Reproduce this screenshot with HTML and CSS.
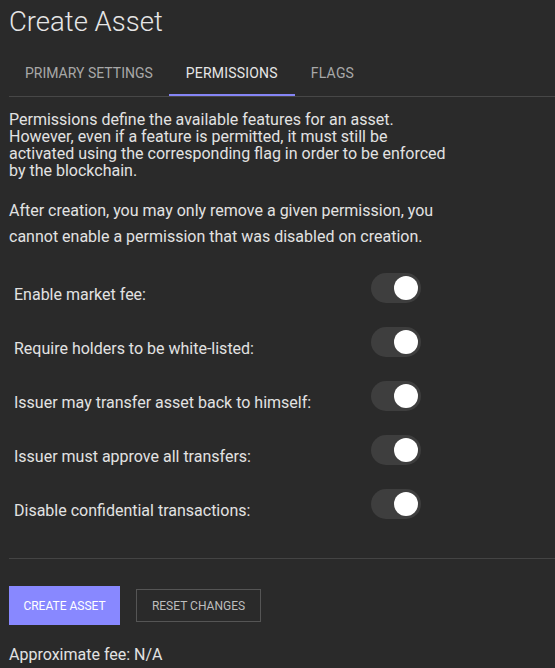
FILE: index.html
```html
<!DOCTYPE html>
<html>
<head>
<meta charset="utf-8">
<link rel="stylesheet" href="styles.css">
</head>
<body>
<div class="page">
  <h1 class="title">Create Asset</h1>
  <div class="tabs">
    <div class="tab">Primary Settings</div>
    <div class="tab active">Permissions</div>
    <div class="tab">Flags</div>
  </div>
  <p class="intro">Permissions define the available features for an asset.<br>However, even if a feature is permitted, it must still be<br>activated using the corresponding flag in order to be enforced<br>by the blockchain.</p>
  <p class="note">After creation, you may only remove a given permission, you<br>cannot enable a permission that was disabled on creation.</p>
  <div class="rows">
    <div class="row"><span class="label">Enable market fee:</span><span class="switch"><span class="knob"></span></span></div>
    <div class="row"><span class="label">Require holders to be white-listed:</span><span class="switch"><span class="knob"></span></span></div>
    <div class="row"><span class="label">Issuer may transfer asset back to himself:</span><span class="switch"><span class="knob"></span></span></div>
    <div class="row"><span class="label">Issuer must approve all transfers:</span><span class="switch"><span class="knob"></span></span></div>
    <div class="row"><span class="label">Disable confidential transactions:</span><span class="switch"><span class="knob"></span></span></div>
  </div>
  <hr class="sep">
  <div class="actions">
    <button class="btn primary">Create Asset</button>
    <button class="btn outline">Reset Changes</button>
  </div>
  <div class="fee">Approximate fee: N/A</div>
</div>
</body>
</html>
```
FILE: styles.css
```css
html, body {
  margin: 0;
  padding: 0;
  background: #2a2a2a;
}
body {
  font-family: Roboto, "Liberation Sans", sans-serif;
  color: #e2e2e2;
  width: 555px;
  height: 668px;
  overflow: hidden;
}
.page {
  padding-left: 9px;
}
.title {
  margin: 0;
  padding-top: 5px;
  font-size: 27.5px;
  font-weight: 300;
  line-height: 34px;
  color: #e6e6e6;
}
.tabs {
  display: flex;
  margin-top: 11px;
  border-bottom: 1px solid #474747;
}
.tab {
  padding: 0 16px;
  height: 46px;
  line-height: 46px;
  font-size: 14px;
  text-transform: uppercase;
  color: #a8a8a8;
  border-bottom: 2px solid transparent;
  box-sizing: border-box;
}
.tab.active {
  color: #e6e6e6;
  border-bottom-color: #8585f5;
  padding: 0 17px;
  letter-spacing: 0.2px;
}
.tab:last-child {
  letter-spacing: 0.2px;
}
.intro {
  margin: 14px 0 0;
  font-size: 16px;
  line-height: 17px;
}
.note {
  margin: 19px 0 0;
  font-size: 16px;
  line-height: 26px;
}
.rows {
  margin-top: 23px;
  width: 412px;
}
.row {
  display: flex;
  justify-content: space-between;
  height: 54px;
}
.label {
  padding-left: 5px;
  padding-top: 12px;
  font-size: 16px;
  line-height: 20px;
}
.switch {
  display: flex;
  align-items: center;
  justify-content: flex-end;
  width: 50px;
  height: 30px;
  padding-right: 3px;
  box-sizing: border-box;
  border-radius: 15px;
  background: #3e3e3e;
}
.knob {
  width: 24px;
  height: 24px;
  border-radius: 50%;
  background: #ffffff;
}
.sep {
  margin: 0;
  margin-top: 15px;
  border: 0;
  border-top: 1px solid #444;
}
.actions {
  display: flex;
  align-items: center;
  gap: 16px;
  margin-top: 27px;
}
.btn {
  font-family: Roboto, "Liberation Sans", sans-serif;
  font-size: 12px;
  text-transform: uppercase;
  border-radius: 0;
  cursor: pointer;
}
.btn.primary {
  width: 111px;
  height: 39px;
  background: #8888ff;
  color: #ffffff;
  border: 0;
}
.btn.outline {
  width: 125px;
  height: 33px;
  background: transparent;
  color: #bdbdbd;
  border: 1px solid #555;
}
.fee {
  margin-top: 20px;
  font-size: 16px;
  line-height: 20px;
}
```
